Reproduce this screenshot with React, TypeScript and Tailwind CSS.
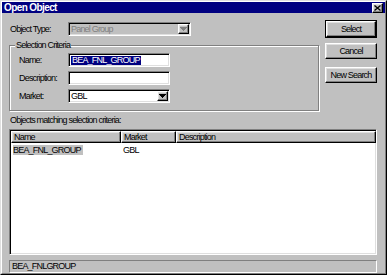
const raised =
  "border border-t-white border-l-white border-r-black border-b-black shadow-[inset_-1px_-1px_#808080,inset_1px_1px_#dfdfdf]";
const sunken =
  "border border-t-[#808080] border-l-[#808080] border-r-white border-b-white shadow-[inset_1px_1px_black,inset_-1px_-1px_#dfdfdf]";

function Arrow({ disabled }: { disabled?: boolean }) {
  return (
    <svg width="7" height="4" viewBox="0 0 7 4" shapeRendering="crispEdges">
      <path d="M0 0h7v1h-1v1h-1v1h-1v1h-1v-1h-1v-1h-1v-1h-1z" fill={disabled ? "#808080" : "black"} />
    </svg>
  );
}

function Combo({ value, width, disabled }: { value: string; width: string; disabled?: boolean }) {
  return (
    <div
      className={`flex h-[14px] ${width} items-center ${sunken} ${
        disabled ? "bg-[#c0c0c0] text-[#808080]" : "bg-white text-black"
      }`}
    >
      <span className="flex-1 pl-[2px]">{value}</span>
      <div className={`mr-[1px] flex h-[10px] w-[11px] items-center justify-center bg-[#c0c0c0] ${raised}`}>
        <Arrow disabled={disabled} />
      </div>
    </div>
  );
}

function Btn({ label, primary }: { label: string; primary?: boolean }) {
  return (
    <div className={primary ? "border border-black" : ""}>
      <div className={`flex h-[16px] items-center justify-center bg-[#c0c0c0] ${raised} ${primary ? "" : "w-[52px]"}`}>
        {label}
      </div>
    </div>
  );
}

function Field({ label, children }: { label: string; children: React.ReactNode }) {
  return (
    <div className="flex h-[14px] items-center">
      <span className="w-[49px]">{label}</span>
      {children}
    </div>
  );
}

export default function App() {
  return (
    <div className="h-[275px] w-[387px] overflow-hidden bg-[#c0c0c0] font-[family-name:'Liberation_Sans',Arial,sans-serif] text-[9px] leading-none tracking-[-0.8px] text-black">
      <div className="h-full border border-t-[#dfdfdf] border-l-[#dfdfdf] border-r-black border-b-black">
        <div className="flex h-full flex-col border border-t-white border-l-white border-r-[#808080] border-b-[#808080]">
          {/* caption */}
          <div className="flex h-[13px] items-center justify-between bg-[#000080] pl-[2px] pr-[2px]">
            <span className="text-[10px] font-bold tracking-[-0.6px] text-white">Open Object</span>
            <div className={`flex h-[10px] w-[11px] items-center justify-center bg-[#c0c0c0] ${raised}`}>
              <svg width="7" height="6" viewBox="0 0 7 6">
                <path d="M0.5 0.5l6 5M6.5 0.5l-6 5" stroke="black" strokeWidth="1.3" />
              </svg>
            </div>
          </div>

          <div className="flex flex-1 flex-col pl-[7px] pr-[8px] pt-[7px]">
            <div className="flex gap-[6px]">
              <div className="flex w-[311px] flex-col">
                <div className="mt-[2px] flex h-[14px] items-center">
                  <span className="w-[59px] pl-[1px]">Object Type:</span>
                  <Combo value="Panel Group" width="w-[123px]" disabled />
                </div>

                <div className="relative mt-[9px] flex h-[66px] flex-col gap-[4px] border border-[#808080] pl-[9px] pt-[7px] shadow-[inset_1px_1px_white,1px_1px_white]">
                  <span className="absolute -top-[5px] left-[5px] bg-[#c0c0c0] px-[1px]">Selection Criteria</span>
                  <Field label="Name:">
                    <div className={`flex h-[14px] w-[102px] items-center bg-white pl-[2px] ${sunken}`}>
                      <span className="bg-[#000080] px-[1px] text-white">BEA_FNL_GROUP</span>
                    </div>
                  </Field>
                  <Field label="Description:">
                    <div className={`h-[14px] w-[102px] bg-white ${sunken}`} />
                  </Field>
                  <Field label="Market:">
                    <Combo value="GBL" width="w-[102px]" />
                  </Field>
                </div>
              </div>

              <div className="flex w-[52px] flex-col">
                <Btn label="Select" primary />
                <div className="mt-[5px]">
                  <Btn label="Cancel" />
                </div>
                <div className="mt-[8px]">
                  <Btn label="New Search" />
                </div>
              </div>
            </div>

            <div className="mt-[5px] pl-[1px]">Objects matching selection criteria:</div>

            <div className={`mt-[4px] flex h-[126px] w-[368px] flex-col bg-white ${sunken}`}>
              <div className="ml-[1px] mt-[1px] flex h-[12px] w-[365px]">
                <div className={`flex w-[110px] items-center bg-[#c0c0c0] pl-[2px] ${raised}`}>Name</div>
                <div className={`flex w-[55px] items-center bg-[#c0c0c0] pl-[2px] ${raised}`}>Market</div>
                <div className={`flex flex-1 items-center bg-[#c0c0c0] pl-[2px] ${raised}`}>Description</div>
              </div>
              <div className="ml-[1px] mt-[2px] flex h-[10px] items-center">
                <div className="w-[110px] pl-[2px]">
                  <span className="bg-[#c0c0c0] pr-[2px]">BEA_FNL_GROUP</span>
                </div>
                <div className="w-[55px] pl-[2px]">GBL</div>
              </div>
            </div>

            <div className="mt-[5px] flex h-[13px] w-[368px] items-center border border-t-[#808080] border-l-[#808080] border-r-white border-b-white pl-[2px]">
              BEA_FNLGROUP
            </div>
          </div>
        </div>
      </div>
    </div>
  );
}
